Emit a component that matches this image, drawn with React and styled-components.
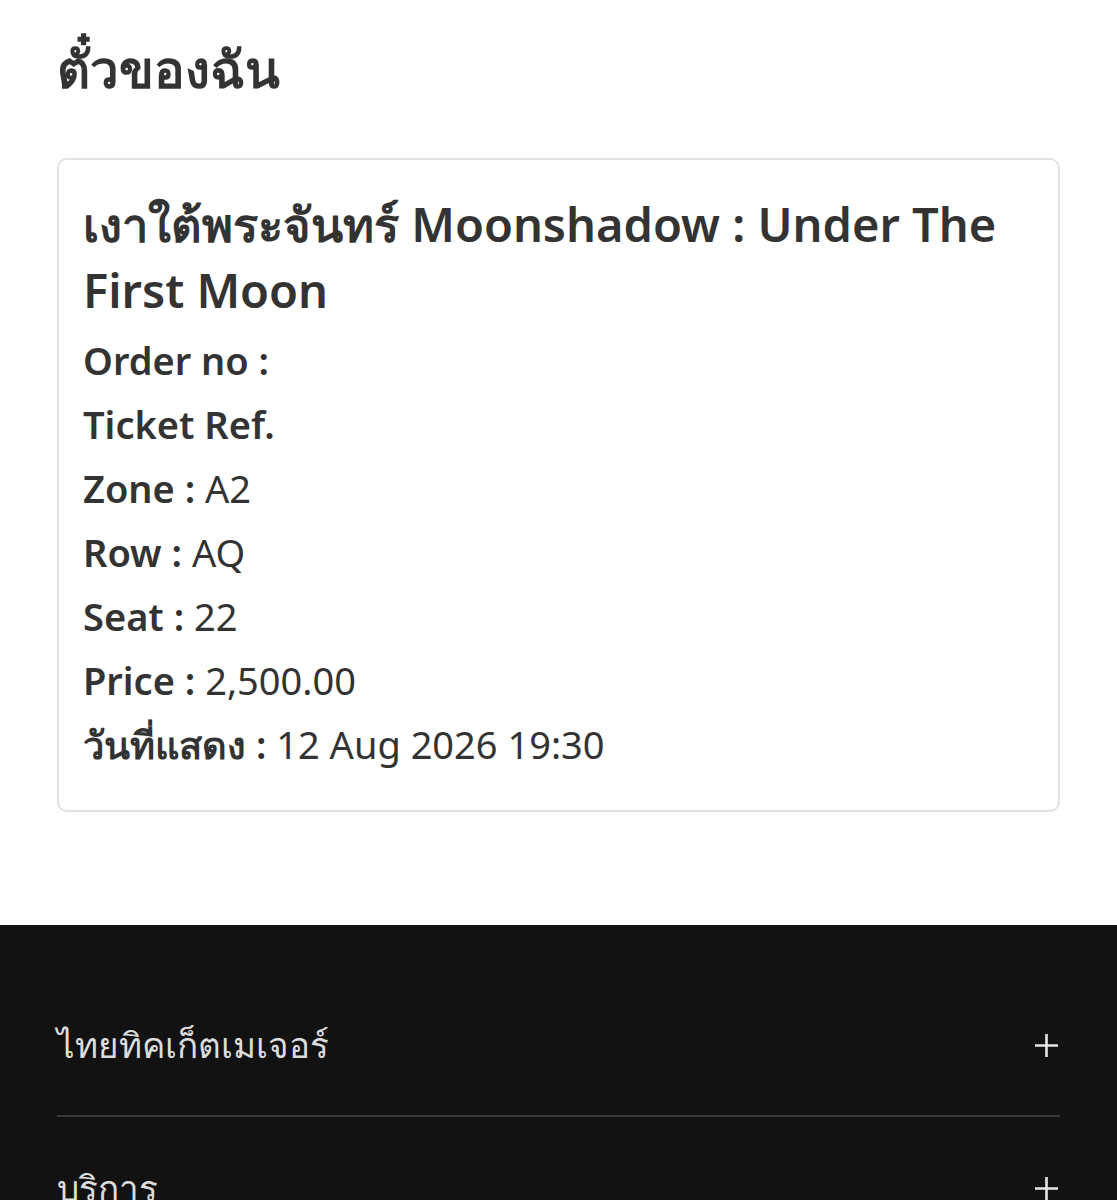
import React from "react";
import styled, { createGlobalStyle } from "styled-components";

const Global = createGlobalStyle`
  html, body { margin: 0; padding: 0; background: #ffffff; }
  body { font-family: "Noto Sans", "Open Sans", sans-serif; color: #333333; }
  * { box-sizing: border-box; }
`;

const Page = styled.div`
  display: flex;
  flex-direction: column;
  min-height: 1200px;
`;

const Main = styled.main`
  padding: 32px 57px 113px 57px;
  display: flex;
  flex-direction: column;
`;

const PageTitle = styled.h1`
  margin: 0 0 54px 0;
  font-size: 51px;
  font-weight: 700;
  line-height: 72px;
  color: #333333;
`;

const Card = styled.section`
  border: 2px solid #e2e2e2;
  border-radius: 10px;
  padding: 31px 24px 34px 24px;
  display: flex;
  flex-direction: column;
`;

const EventName = styled.h2`
  margin: 0 0 5px 0;
  font-size: 47px;
  font-weight: 600;
  line-height: 66px;
  color: #333333;
`;

const Line = styled.div`
  font-size: 38px;
  line-height: 64px;
  color: #333333;
`;

const Label = styled.span`
  font-weight: 600;
`;

const Value = styled.span`
  font-weight: 400;
`;

const Footer = styled.footer`
  background: #121212;
  padding: 50px 57px 0 57px;
  flex: 1;
`;

const FooterRow = styled.div`
  display: flex;
  align-items: center;
  justify-content: space-between;
  height: ${(p) => p.h}px;
  border-bottom: ${(p) => (p.divider ? "2px solid #3a3a3a" : "none")};
`;

const FooterLabel = styled.span`
  font-size: 35px;
  font-weight: 300;
  color: #dddddd;
`;

const Plus = styled.svg`
  width: 25px;
  height: 25px;
  margin-right: 1px;
`;

const PlusIcon = () => (
  <Plus viewBox="0 0 25 25">
    <path d="M12.5 1v23M1 12.5h23" stroke="#e6e6e6" strokeWidth="2.6" fill="none" />
  </Plus>
);

const rows = [
  ["Order no :", ""],
  ["Ticket Ref.", ""],
  ["Zone :", "A2"],
  ["Row :", "AQ"],
  ["Seat :", "22"],
  ["Price :", "2,500.00"],
  ["วันที่แสดง :", "12 Aug 2026 19:30"],
];

export default function App() {
  return (
    <Page>
      <Global />
      <Main>
        <PageTitle>ตั๋วของฉัน</PageTitle>
        <Card>
          <EventName>เงาใต้พระจันทร์ Moonshadow : Under The First Moon</EventName>
          {rows.map(([l, v]) => (
            <Line key={l}>
              <Label>{l}</Label> <Value>{v}</Value>
            </Line>
          ))}
        </Card>
      </Main>
      <Footer>
        <FooterRow h={142} divider>
          <FooterLabel>ไทยทิคเก็ตเมเจอร์</FooterLabel>
          <PlusIcon />
        </FooterRow>
        <FooterRow h={142}>
          <FooterLabel>บริการ</FooterLabel>
          <PlusIcon />
        </FooterRow>
      </Footer>
    </Page>
  );
}
